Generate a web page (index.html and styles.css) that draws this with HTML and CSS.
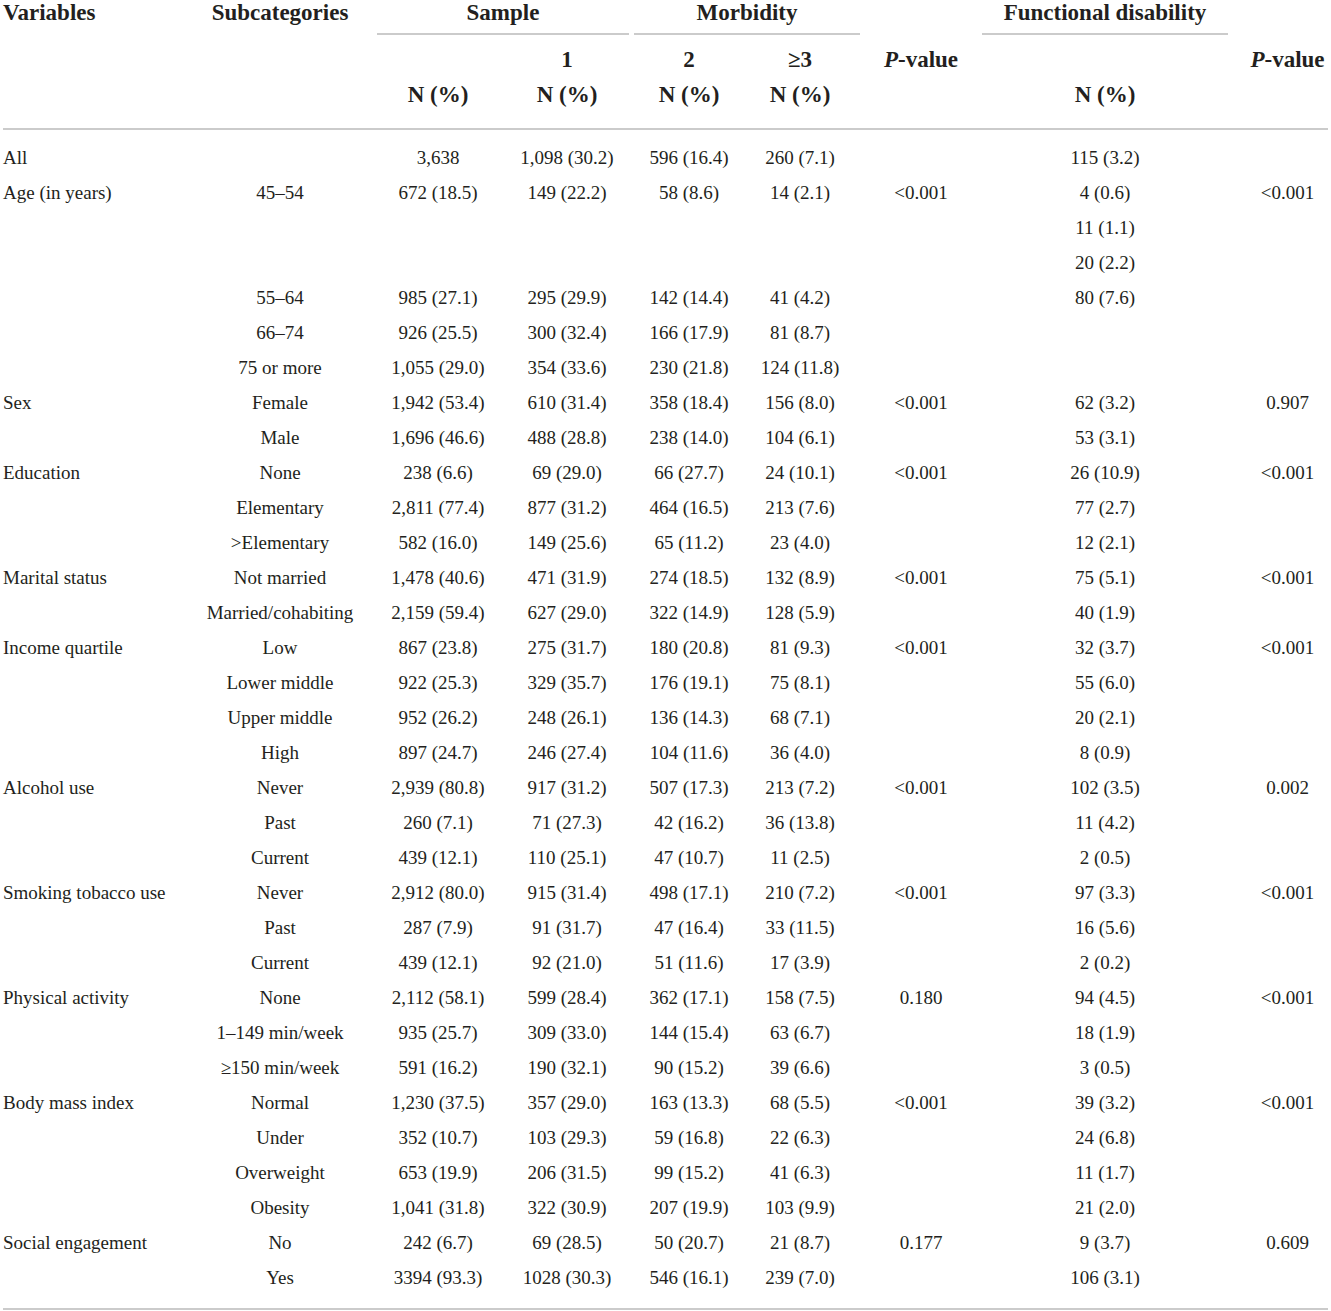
FILE: index.html
```html
<!DOCTYPE html>
<html lang="en">
<head>
<meta charset="utf-8">
<title>Table</title>
<link rel="stylesheet" href="styles.css">
</head>
<body>
<table class="tbl">
  <colgroup>
    <col class="w0"><col class="w1"><col class="w2"><col class="w3"><col class="w4"><col class="w5"><col class="w6"><col class="w7"><col class="w8">
  </colgroup>
  <thead>
    <tr class="h1">
      <th class="left">Variables</th>
      <th>Subcategories</th>
      <th colspan="2"><div class="span span-sample">Sample</div></th>
      <th colspan="2"><div class="span span-morb">Morbidity</div></th>
      <th></th>
      <th><div class="span span-fd">Functional disability</div></th>
      <th></th>
    </tr>
    <tr class="h2">
      <th></th><th></th><th></th>
      <th>1</th><th>2</th><th>≥3</th>
      <th><i>P</i>-value</th>
      <th></th>
      <th class="last"><i>P</i>-value</th>
    </tr>
    <tr class="h3">
      <th></th><th></th>
      <th>N (%)</th><th>N (%)</th><th>N (%)</th><th>N (%)</th>
      <th></th>
      <th>N (%)</th>
      <th></th>
    </tr>
  </thead>
  <tbody>
    <tr class="first"><td>All</td><td></td><td>3,638</td><td>1,098 (30.2)</td><td>596 (16.4)</td><td>260 (7.1)</td><td></td><td>115 (3.2)</td><td class="last"></td></tr>
    <tr><td>Age (in years)</td><td>45–54</td><td>672 (18.5)</td><td>149 (22.2)</td><td>58 (8.6)</td><td>14 (2.1)</td><td>&lt;0.001</td><td>4 (0.6)</td><td class="last">&lt;0.001</td></tr>
    <tr><td></td><td></td><td></td><td></td><td></td><td></td><td></td><td>11 (1.1)</td><td class="last"></td></tr>
    <tr><td></td><td></td><td></td><td></td><td></td><td></td><td></td><td>20 (2.2)</td><td class="last"></td></tr>
    <tr><td></td><td>55–64</td><td>985 (27.1)</td><td>295 (29.9)</td><td>142 (14.4)</td><td>41 (4.2)</td><td></td><td>80 (7.6)</td><td class="last"></td></tr>
    <tr><td></td><td>66–74</td><td>926 (25.5)</td><td>300 (32.4)</td><td>166 (17.9)</td><td>81 (8.7)</td><td></td><td></td><td class="last"></td></tr>
    <tr><td></td><td>75 or more</td><td>1,055 (29.0)</td><td>354 (33.6)</td><td>230 (21.8)</td><td>124 (11.8)</td><td></td><td></td><td class="last"></td></tr>
    <tr><td>Sex</td><td>Female</td><td>1,942 (53.4)</td><td>610 (31.4)</td><td>358 (18.4)</td><td>156 (8.0)</td><td>&lt;0.001</td><td>62 (3.2)</td><td class="last">0.907</td></tr>
    <tr><td></td><td>Male</td><td>1,696 (46.6)</td><td>488 (28.8)</td><td>238 (14.0)</td><td>104 (6.1)</td><td></td><td>53 (3.1)</td><td class="last"></td></tr>
    <tr><td>Education</td><td>None</td><td>238 (6.6)</td><td>69 (29.0)</td><td>66 (27.7)</td><td>24 (10.1)</td><td>&lt;0.001</td><td>26 (10.9)</td><td class="last">&lt;0.001</td></tr>
    <tr><td></td><td>Elementary</td><td>2,811 (77.4)</td><td>877 (31.2)</td><td>464 (16.5)</td><td>213 (7.6)</td><td></td><td>77 (2.7)</td><td class="last"></td></tr>
    <tr><td></td><td>&gt;Elementary</td><td>582 (16.0)</td><td>149 (25.6)</td><td>65 (11.2)</td><td>23 (4.0)</td><td></td><td>12 (2.1)</td><td class="last"></td></tr>
    <tr><td>Marital status</td><td>Not married</td><td>1,478 (40.6)</td><td>471 (31.9)</td><td>274 (18.5)</td><td>132 (8.9)</td><td>&lt;0.001</td><td>75 (5.1)</td><td class="last">&lt;0.001</td></tr>
    <tr><td></td><td>Married/cohabiting</td><td>2,159 (59.4)</td><td>627 (29.0)</td><td>322 (14.9)</td><td>128 (5.9)</td><td></td><td>40 (1.9)</td><td class="last"></td></tr>
    <tr><td>Income quartile</td><td>Low</td><td>867 (23.8)</td><td>275 (31.7)</td><td>180 (20.8)</td><td>81 (9.3)</td><td>&lt;0.001</td><td>32 (3.7)</td><td class="last">&lt;0.001</td></tr>
    <tr><td></td><td>Lower middle</td><td>922 (25.3)</td><td>329 (35.7)</td><td>176 (19.1)</td><td>75 (8.1)</td><td></td><td>55 (6.0)</td><td class="last"></td></tr>
    <tr><td></td><td>Upper middle</td><td>952 (26.2)</td><td>248 (26.1)</td><td>136 (14.3)</td><td>68 (7.1)</td><td></td><td>20 (2.1)</td><td class="last"></td></tr>
    <tr><td></td><td>High</td><td>897 (24.7)</td><td>246 (27.4)</td><td>104 (11.6)</td><td>36 (4.0)</td><td></td><td>8 (0.9)</td><td class="last"></td></tr>
    <tr><td>Alcohol use</td><td>Never</td><td>2,939 (80.8)</td><td>917 (31.2)</td><td>507 (17.3)</td><td>213 (7.2)</td><td>&lt;0.001</td><td>102 (3.5)</td><td class="last">0.002</td></tr>
    <tr><td></td><td>Past</td><td>260 (7.1)</td><td>71 (27.3)</td><td>42 (16.2)</td><td>36 (13.8)</td><td></td><td>11 (4.2)</td><td class="last"></td></tr>
    <tr><td></td><td>Current</td><td>439 (12.1)</td><td>110 (25.1)</td><td>47 (10.7)</td><td>11 (2.5)</td><td></td><td>2 (0.5)</td><td class="last"></td></tr>
    <tr><td>Smoking tobacco use</td><td>Never</td><td>2,912 (80.0)</td><td>915 (31.4)</td><td>498 (17.1)</td><td>210 (7.2)</td><td>&lt;0.001</td><td>97 (3.3)</td><td class="last">&lt;0.001</td></tr>
    <tr><td></td><td>Past</td><td>287 (7.9)</td><td>91 (31.7)</td><td>47 (16.4)</td><td>33 (11.5)</td><td></td><td>16 (5.6)</td><td class="last"></td></tr>
    <tr><td></td><td>Current</td><td>439 (12.1)</td><td>92 (21.0)</td><td>51 (11.6)</td><td>17 (3.9)</td><td></td><td>2 (0.2)</td><td class="last"></td></tr>
    <tr><td>Physical activity</td><td>None</td><td>2,112 (58.1)</td><td>599 (28.4)</td><td>362 (17.1)</td><td>158 (7.5)</td><td>0.180</td><td>94 (4.5)</td><td class="last">&lt;0.001</td></tr>
    <tr><td></td><td>1–149 min/week</td><td>935 (25.7)</td><td>309 (33.0)</td><td>144 (15.4)</td><td>63 (6.7)</td><td></td><td>18 (1.9)</td><td class="last"></td></tr>
    <tr><td></td><td>≥150 min/week</td><td>591 (16.2)</td><td>190 (32.1)</td><td>90 (15.2)</td><td>39 (6.6)</td><td></td><td>3 (0.5)</td><td class="last"></td></tr>
    <tr><td>Body mass index</td><td>Normal</td><td>1,230 (37.5)</td><td>357 (29.0)</td><td>163 (13.3)</td><td>68 (5.5)</td><td>&lt;0.001</td><td>39 (3.2)</td><td class="last">&lt;0.001</td></tr>
    <tr><td></td><td>Under</td><td>352 (10.7)</td><td>103 (29.3)</td><td>59 (16.8)</td><td>22 (6.3)</td><td></td><td>24 (6.8)</td><td class="last"></td></tr>
    <tr><td></td><td>Overweight</td><td>653 (19.9)</td><td>206 (31.5)</td><td>99 (15.2)</td><td>41 (6.3)</td><td></td><td>11 (1.7)</td><td class="last"></td></tr>
    <tr><td></td><td>Obesity</td><td>1,041 (31.8)</td><td>322 (30.9)</td><td>207 (19.9)</td><td>103 (9.9)</td><td></td><td>21 (2.0)</td><td class="last"></td></tr>
    <tr><td>Social engagement</td><td>No</td><td>242 (6.7)</td><td>69 (28.5)</td><td>50 (20.7)</td><td>21 (8.7)</td><td>0.177</td><td>9 (3.7)</td><td class="last">0.609</td></tr>
    <tr class="end"><td></td><td>Yes</td><td>3394 (93.3)</td><td>1028 (30.3)</td><td>546 (16.1)</td><td>239 (7.0)</td><td></td><td>106 (3.1)</td><td class="last"></td></tr>
  </tbody>
</table>
</body>
</html>
```
FILE: styles.css
```css
html, body {
  margin: 0;
  padding: 0;
  background: #ffffff;
}

body {
  font-family: "Liberation Serif", "Times New Roman", serif;
  color: #231f20;
}

.tbl {
  margin-left: 3px;
  width: 1325px;
  table-layout: fixed;
  border-collapse: collapse;
  border-spacing: 0;
}

.w0 { width: 197px; }
.w1 { width: 160px; }
.w2 { width: 156px; }
.w3 { width: 102px; }
.w4 { width: 142px; }
.w5 { width: 80px; }
.w6 { width: 162px; }
.w7 { width: 206px; }
.w8 { width: 120px; }

th {
  font-size: 23px;
  font-weight: bold;
  text-align: center;
  padding: 0;
  white-space: nowrap;
}

th.left { text-align: left; }

.h1 th {
  height: 37px;
  vertical-align: top;
  line-height: 26px;
}

.span {
  border-bottom: 2px solid #cbcbcb;
  height: 35px;
  box-sizing: border-box;
}

.span-sample { margin: 0 -11px 0 17px; }
.span-morb { margin: 0 -20px 0 16px; }
.span-fd { margin: 0 -20px 0 -20px; }

.h2 th {
  height: 46px;
  line-height: 46px;
  vertical-align: middle;
}

.h3 th {
  line-height: 24px;
  padding-bottom: 21px;
  border-bottom: 2px solid #cbcbcb;
}

td {
  font-size: 19px;
  text-align: center;
  line-height: 35px;
  height: 35px;
  padding: 0;
  white-space: nowrap;
}

td:first-child { text-align: left; }

th.last, td.last { padding-left: 39px; }

tr.first td { padding-top: 10px; }

tr.end td {
  padding-bottom: 13px;
  border-bottom: 2px solid #cbcbcb;
}
```
